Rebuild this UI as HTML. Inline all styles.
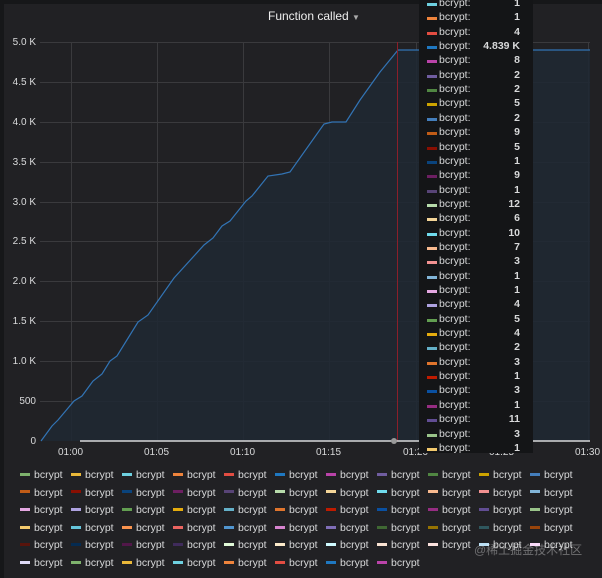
<!DOCTYPE html>
<html><head><meta charset="utf-8"><style>
body{margin:0;width:602px;height:574px;background:#161719;font-family:"Liberation Sans",sans-serif;overflow:hidden;position:relative}
.panel{position:absolute;left:4px;top:4px;width:602px;height:574px;background:#212124}
.t{position:absolute;font-size:10px;color:#d8d9da}
.leg{position:absolute;font-size:10.5px;color:#d8d9da;white-space:nowrap}
.leg i{display:inline-block;width:10px;height:3px;vertical-align:middle;margin-right:4px;margin-top:-2px}
#tt{position:absolute;left:419px;top:0;width:114px;height:453px;background:#141517}
.tr{position:absolute;left:0;width:114px;font-size:10.5px;color:#d8d9da;height:14px}
.tr i{position:absolute;left:8px;top:6px;width:10px;height:3px}
.tr span{position:absolute;left:20px}
.tr b{position:absolute;right:13px}
</style></head><body>
<div class="panel"></div>
<div class="t" style="left:268px;top:9px;font-size:12px;color:#eee">Function called <span style="font-size:8px;color:#aaa">▼</span></div>
<svg style="position:absolute;left:0;top:0" width="602" height="574">
<g stroke="#3a3a3d" stroke-width="1">
<line x1="40" y1="42.5" x2="590" y2="42.5"/><line x1="40" y1="82.5" x2="590" y2="82.5"/><line x1="40" y1="122.5" x2="590" y2="122.5"/><line x1="40" y1="162.5" x2="590" y2="162.5"/><line x1="40" y1="202.5" x2="590" y2="202.5"/><line x1="40" y1="241.5" x2="590" y2="241.5"/><line x1="40" y1="281.5" x2="590" y2="281.5"/><line x1="40" y1="321.5" x2="590" y2="321.5"/><line x1="40" y1="361.5" x2="590" y2="361.5"/><line x1="40" y1="401.5" x2="590" y2="401.5"/>
<line x1="71.5" y1="42" x2="71.5" y2="441"/><line x1="157.5" y1="42" x2="157.5" y2="441"/><line x1="243.5" y1="42" x2="243.5" y2="441"/><line x1="329.5" y1="42" x2="329.5" y2="441"/><line x1="416.5" y1="42" x2="416.5" y2="441"/><line x1="502.5" y1="42" x2="502.5" y2="441"/><line x1="588.5" y1="42" x2="588.5" y2="441"/>
</g>
<path d="M41,441 L52,426 58,420 74,401 82,396 93,381 102,374 110,361 117,356 138,322 148,315 174,278 204,245 213,238 222,226 230,221 246,201 252,196 268,176 282,174 290,172 324,124 332,122 346,122 360,100 380,72 398,50 590,50 L590,441 Z" fill="#1e2833" fill-opacity="0.85" stroke="none"/>
<path d="M41,441 L52,426 58,420 74,401 82,396 93,381 102,374 110,361 117,356 138,322 148,315 174,278 204,245 213,238 222,226 230,221 246,201 252,196 268,176 282,174 290,172 324,124 332,122 346,122 360,100 380,72 398,50 590,50" fill="none" stroke="#3274b5" stroke-width="1.2"/>
<line x1="397.5" y1="42" x2="397.5" y2="441" stroke="#8a1f2a"/>
<line x1="80" y1="441" x2="590" y2="441" stroke="#d8d9da" stroke-width="1.5"/>
<circle cx="394" cy="441" r="3" fill="#999"/>
</svg>
<div class="t" style="right:566px;top:37px">5.0 K</div>
<div class="t" style="right:566px;top:77px">4.5 K</div>
<div class="t" style="right:566px;top:117px">4.0 K</div>
<div class="t" style="right:566px;top:157px">3.5 K</div>
<div class="t" style="right:566px;top:197px">3.0 K</div>
<div class="t" style="right:566px;top:236px">2.5 K</div>
<div class="t" style="right:566px;top:276px">2.0 K</div>
<div class="t" style="right:566px;top:316px">1.5 K</div>
<div class="t" style="right:566px;top:356px">1.0 K</div>
<div class="t" style="right:566px;top:396px">500</div>
<div class="t" style="right:566px;top:436px">0</div>
<div class="t" style="left:58px;top:447px">01:00</div>
<div class="t" style="left:144px;top:447px">01:05</div>
<div class="t" style="left:230px;top:447px">01:10</div>
<div class="t" style="left:316px;top:447px">01:15</div>
<div class="t" style="left:403px;top:447px">01:20</div>
<div class="t" style="left:489px;top:447px">01:25</div>
<div class="t" style="left:575px;top:447px">01:30</div>
<div id="tt"></div>
<div id="lg"></div>
<div style="position:absolute;left:474px;top:541px;font-size:12px;color:rgba(255,255,255,0.35);font-family:'Liberation Sans','Noto Sans CJK SC',sans-serif">@稀土掘金技术社区</div>
<script>
var c=["#7eb26d","#eab839","#6ed0e0","#ef843c","#e24d42","#1f78c1","#ba43a9","#705da0","#508642","#cca300","#447ebc","#c15c17","#890f02","#0a437c","#6d1f62","#584477","#b7dbab","#f4d598","#70dbed","#f9ba8f","#f29191","#82b5d8","#e5a8e2","#aea2e0","#629e51","#e5ac0e","#64b0c8","#e0752d","#bf1b00","#0a50a1","#962d82","#614d93","#9ac48a","#f2c96d","#65c5db","#f9934e","#ea6460","#5195ce","#d683ce","#806eb7","#3f6833","#967302","#2f575e","#99440a","#58140c","#052b51","#511749","#3f2b5b","#e0f9d7","#fceaca","#cffaff","#f9e2d2","#fce2de","#badff4","#f9d9f9","#dedaf7","#7eb26d","#eab839","#6ed0e0","#ef843c","#e24d42","#1f78c1","#ba43a9"];
var h="";for(var i=0;i<63;i++){var r=Math.floor(i/11),k=i%11;h+='<div class="leg" style="left:'+(20+k*51)+'px;top:'+(469+r*17.6)+'px"><i style="background:'+c[i]+'"></i>bcrypt</div>';}
document.getElementById("lg").innerHTML=h;
var v=["1","1","4","4.839 K","8","2","2","5","2","9","5","1","9","1","12","6","10","7","3","1","1","4","5","4","2","3","1","3","1","11","3","1"];
var tc=["#6ed0e0","#ef843c","#e24d42","#1f78c1","#ba43a9","#705da0","#508642","#cca300","#447ebc","#c15c17","#890f02","#0a437c","#6d1f62","#584477","#b7dbab","#f4d598","#70dbed","#f9ba8f","#f29191","#82b5d8","#e5a8e2","#aea2e0","#629e51","#e5ac0e","#64b0c8","#e0752d","#bf1b00","#0a50a1","#962d82","#614d93","#9ac48a","#f2c96d"];
h="";for(var j=0;j<32;j++){h+='<div class="tr" style="top:'+(-3+j*14.35)+'px"><i style="background:'+tc[j]+'"></i><span>bcrypt:</span><b>'+v[j]+'</b></div>';}
document.getElementById("tt").innerHTML=h;
</script>
</body></html>
